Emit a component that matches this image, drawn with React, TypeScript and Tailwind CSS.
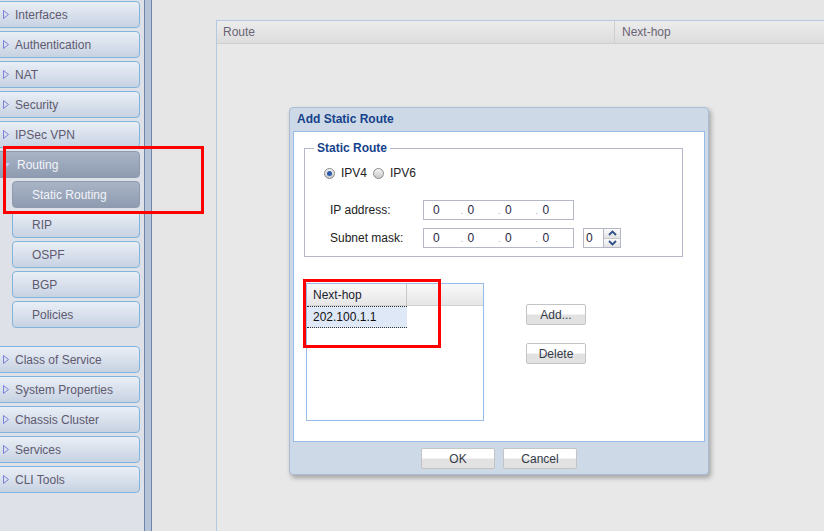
import { ReactNode } from 'react';

const navTop = ['Interfaces', 'Authentication', 'NAT', 'Security', 'IPSec VPN'];
const routingSub = ['RIP', 'OSPF', 'BGP', 'Policies'];
const navBottom = ['Class of Service', 'System Properties', 'Chassis Cluster', 'Services', 'CLI Tools'];

const Caret = ({ open = false }: { open?: boolean }) =>
  open ? (
    <svg width="8" height="6" viewBox="0 0 8 6" className="shrink-0">
      <path d="M0.5 0.5 H7.5 L4 5.5 Z" fill="#c9d0e6" stroke="#9aa6d8" strokeWidth="1" />
    </svg>
  ) : (
    <svg width="6" height="9" viewBox="0 0 6 9" className="shrink-0">
      <path d="M0.5 0.5 L5.5 4.5 L0.5 8.5 Z" fill="none" stroke="#7b80d8" strokeWidth="1" />
    </svg>
  );

const NavItem = ({ label }: { label: string }) => (
  <div className="h-[27px] ml-[-4px] w-[144px] rounded-r-[4px] border border-[#80b4dc] bg-linear-to-b from-[#eaeff6] to-[#c7d2e2] flex items-center pl-[6px] gap-[6px] text-[#5f5a70] shrink-0">
    <Caret />
    <span>{label}</span>
  </div>
);

const SubItem = ({ label, active = false }: { label: string; active?: boolean }) => (
  <div
    className={`h-[27px] ml-[12px] w-[128px] rounded-[4px] border flex items-center pl-[19px] shrink-0 ${
      active
        ? 'border-[#8d9ab0] bg-linear-to-b from-[#a9b4c6] to-[#8e9bb0] text-[#f2f4fa]'
        : 'border-[#80b4dc] bg-linear-to-b from-[#eaeff6] to-[#c7d2e2] text-[#5f5a70]'
    }`}
  >
    {label}
  </div>
);

const Radio = ({ checked = false }: { checked?: boolean }) => (
  <span className="w-[11px] h-[11px] rounded-full border border-[#8a8a8a] bg-linear-to-b from-[#f4f4f4] to-[#c8c8c8] flex items-center justify-center shrink-0">
    {checked && <span className="w-[5px] h-[5px] rounded-full bg-[#2c5aa8]" />}
  </span>
);

const IpInput = () => (
  <div className="w-[151px] h-[20px] border border-[#b3b7c6] bg-white flex items-center text-[#2a2a44]">
    <span className="w-[37px] pl-[9px]">0</span>
    {[0, 1, 2].map((i) => (
      <span key={i} className="w-[38px] flex items-center">
        <span className="text-[#a0a0a0] w-[7px] text-[9px] pt-[4px]">.</span>
        <span>0</span>
      </span>
    ))}
  </div>
);

const Btn = ({ children, className = '' }: { children: ReactNode; className?: string }) => (
  <div
    className={`h-[21px] rounded-[2px] border border-[#c4c4c4] bg-linear-to-b from-[#ffffff] from-45% to-[#e2e2e2] to-55% flex items-center justify-center text-[#333a48] ${className}`}
  >
    {children}
  </div>
);

const App = () => {
  return (
    <div className="relative w-[824px] h-[531px] overflow-hidden flex text-[12px] font-['Liberation_Sans',Arial,sans-serif]">
      {/* Sidebar */}
      <div className="w-[144px] h-full bg-[#dee1e7] flex flex-col gap-[3px] pt-[1px]">
        {navTop.map((l) => (
          <NavItem key={l} label={l} />
        ))}
        <div className="h-[27px] ml-[-4px] w-[144px] rounded-r-[4px] border border-[#8d9ab0] bg-linear-to-b from-[#a9b4c6] to-[#8e9bb0] flex items-center pl-[6px] gap-[6px] text-[#f2f4fa] shrink-0">
          <Caret open />
          <span>Routing</span>
        </div>
        <SubItem label="Static Routing" active />
        {routingSub.map((l) => (
          <SubItem key={l} label={l} />
        ))}
        <div className="h-[12px] shrink-0" />
        {navBottom.map((l) => (
          <NavItem key={l} label={l} />
        ))}
      </div>

      {/* Splitter */}
      <div className="w-[8px] h-full border-x border-[#6e84a8] bg-[#b7c3d8]" />

      {/* Main */}
      <div className="flex-1 h-full bg-[#e6e6e6] pt-[20px] pl-[64px]">
        <div className="h-full border-l border-t border-[#b4c8e2] bg-[#e8e8e8]">
          <div className="h-[23px] flex border-b border-[#cfcfcf] bg-linear-to-b from-[#ececec] to-[#dddddd] text-[#6b6474]">
            <div className="w-[398px] border-r border-[#cfcfcf] pl-[6px] flex items-center">Route</div>
            <div className="flex-1 pl-[7px] flex items-center">Next-hop</div>
          </div>
        </div>
      </div>

      {/* Dialog */}
      <div className="absolute left-[289px] top-[107px] w-[420px] h-[368px] rounded-[4px] border border-[#a9bcd4] bg-[#cdd9e6] shadow-[2px_3px_5px_rgba(0,0,0,0.3)] flex flex-col px-[3px]">
        <div className="h-[23px] flex items-center pl-[4px] pb-[2px] font-bold text-[#15428b]">Add Static Route</div>
        <div className="h-[311px] border border-[#99bbe8] bg-white relative pt-[7px] pl-[10px]">
          <fieldset className="w-[379px] h-[118px] border border-[#b5b8c8] px-[19px]">
            <legend className="ml-[-10px] px-[3px] font-bold text-[#15428b]">Static Route</legend>
            <div className="flex items-center gap-[6px] mt-[7px] text-[#222]">
              <Radio checked />
              <span>IPV4</span>
              <Radio />
              <span>IPV6</span>
            </div>
            <div className="flex items-center mt-[18px] text-[#222]">
              <span className="w-[99px] pl-[6px]">IP address:</span>
              <IpInput />
            </div>
            <div className="flex items-center mt-[8px] text-[#222]">
              <span className="w-[99px] pl-[6px]">Subnet mask:</span>
              <IpInput />
              <div className="ml-[9px] flex h-[20px]">
                <div className="w-[21px] border border-[#b3b7c6] bg-white pl-[2px] flex items-center text-[#2a2a44]">0</div>
                <div className="w-[17px] flex flex-col border border-l-0 border-[#b3b7c6]">
                  <div className="flex-1 bg-linear-to-b from-[#fbfbfb] to-[#e3e3e3] flex items-center justify-center border-b border-[#c8c8c8]">
                    <svg width="9" height="6" viewBox="0 0 9 6">
                      <path d="M1 5 L4.5 1.5 L8 5" fill="none" stroke="#2f4f86" strokeWidth="1.8" />
                    </svg>
                  </div>
                  <div className="flex-1 bg-linear-to-b from-[#fbfbfb] to-[#e3e3e3] flex items-center justify-center">
                    <svg width="9" height="6" viewBox="0 0 9 6">
                      <path d="M1 1 L4.5 4.5 L8 1" fill="none" stroke="#2f4f86" strokeWidth="1.8" />
                    </svg>
                  </div>
                </div>
              </div>
            </div>
          </fieldset>

          <div className="flex mt-[26px] ml-[2px]">
            <div className="w-[178px] h-[138px] border border-[#99bbe8]">
              <div className="h-[22px] flex border-b border-[#d0d0d0] bg-linear-to-b from-[#f9f9f9] to-[#e6e6e6] text-[#1c1c30]">
                <div className="w-[100px] border-r border-[#c8c8c8] pl-[6px] flex items-center">Next-hop</div>
              </div>
              <div className="w-[100px] h-[22px] bg-[#dfe8f6] border-y border-dotted border-[#333] pl-[6px] flex items-center text-[#111]">
                202.100.1.1
              </div>
            </div>
            <div className="ml-[42px] pt-[21px] flex flex-col gap-[18px]">
              <Btn className="w-[60px]">Add...</Btn>
              <Btn className="w-[60px]">Delete</Btn>
            </div>
          </div>
        </div>
        <div className="flex justify-center gap-[8px] pt-[6px]">
          <Btn className="w-[74px]">OK</Btn>
          <Btn className="w-[74px]">Cancel</Btn>
        </div>
      </div>

      {/* Highlight boxes */}
      <div className="absolute left-[3px] top-[146px] w-[201px] h-[68px] border-[3px] border-[#ff0000]" />
      <div className="absolute left-[303px] top-[279px] w-[138px] h-[69px] border-[3px] border-[#ff0000]" />
    </div>
  );
};

export default App;
